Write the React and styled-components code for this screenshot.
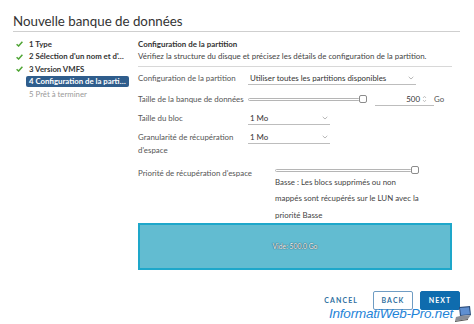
import React from "react";
import styled, { createGlobalStyle } from "styled-components";

const Global = createGlobalStyle`
  html, body { margin: 0; padding: 0; background: #fff; }
  body { font-family: Lato, "Noto Sans", sans-serif; color: #333; }
  * { box-sizing: border-box; }
`;

const Page = styled.div`
  position: relative;
  width: 474px;
  height: 324px;
  overflow: hidden;
  padding: 13px 14px 0 13px;
`;

const Title = styled.h1`
  margin: 0;
  font-size: 13.3px;
  font-weight: 400;
  color: #333;
  line-height: 17px;
  padding-bottom: 1px;
  border-bottom: 1px solid #cfcfcf;
`;

const Body = styled.div`
  display: flex;
  padding-top: 6px;
`;

const Nav = styled.ul`
  list-style: none;
  margin: 0;
  padding: 0 0 0 3px;
  width: 125px;
  flex: 0 0 125px;
`;

const NavItem = styled.li`
  display: flex;
  align-items: center;
  gap: 3px;
  height: 12.5px;
  font-size: 7.8px;
  font-weight: ${(p) => (p.$muted ? 400 : 700)};
  color: ${(p) => (p.$active ? "#fff" : p.$muted ? "#9a9a9a" : "#333")};
  white-space: nowrap;
`;

const NavLabel = styled.span`
  display: block;
  background: ${(p) => (p.$active ? "#2f5d8c" : "transparent")};
  border-radius: 2px;
  padding: 0 3px;
  line-height: 11px;
  width: ${(p) => (p.$active ? "103px" : "auto")};
  overflow: hidden;
  text-overflow: ellipsis;
`;

const CheckSlot = styled.span`
  width: 7px;
  display: inline-flex;
  justify-content: center;
`;

const Content = styled.div`
  flex: 1;
  padding-right: 8px;
`;

const Heading = styled.div`
  font-size: 7.9px;
  font-weight: 700;
  color: #333;
  line-height: 12px;
`;

const Desc = styled.div`
  font-size: 7.9px;
  color: #444;
  line-height: 13px;
  padding-bottom: 3px;
  border-bottom: 1px solid #d8d8d8;
`;

const Form = styled.div`
  display: grid;
  grid-template-columns: 110px 1fr;
  align-items: start;
  padding-top: 5px;
`;

const Label = styled.div`
  font-size: 7.9px;
  color: #555;
  line-height: 13px;
  white-space: nowrap;
  min-height: ${(p) => p.$h || 0}px;
`;

const Control = styled.div`
  display: flex;
  align-items: flex-start;
  min-height: ${(p) => p.$h || 0}px;
`;

const Select = styled.div`
  display: flex;
  align-items: center;
  justify-content: space-between;
  width: ${(p) => p.$w}px;
  height: 13px;
  padding: 0 2px;
  border-bottom: 1px solid #bdbdbd;
  font-size: 7.9px;
  color: #333;
`;

const Slider = styled.div`
  width: ${(p) => p.$w}px;
  height: 8px;
  margin-top: ${(p) => p.$mt || 0}px;
  display: flex;
  align-items: center;
`;

const Track = styled.div`
  flex: 1;
  height: 3px;
  border: 1px solid #b5b5b5;
  border-radius: 2px;
  background: #fff;
`;

const Thumb = styled.div`
  width: 8px;
  height: 8px;
  flex: 0 0 8px;
  margin-left: -1px;
  border: 1px solid #8c8c8c;
  border-radius: 2px;
  background: #fff;
`;

const NumberBox = styled.div`
  display: flex;
  align-items: center;
  justify-content: flex-end;
  gap: 2px;
  width: 59px;
  height: 13px;
  margin-left: 8px;
  padding-right: 7px;
  border-bottom: 1px solid #bdbdbd;
  font-size: 7.9px;
  color: #333;
`;

const Unit = styled.span`
  font-size: 7.9px;
  line-height: 13px;
  color: #555;
`;

const Stack = styled.div`
  display: flex;
  flex-direction: column;
  padding-left: 27px;
`;

const Help = styled.div`
  font-size: 7.9px;
  color: #444;
  line-height: 16.3px;
  width: 146px;
`;

const FreeSpace = styled.div`
  height: 47px;
  border: 2px solid #1ea7ca;
  background: #62bcd1;
  display: flex;
  align-items: center;
  justify-content: center;
  font-size: 6.8px;
  color: #fff;
  text-shadow: 0 0 1px #1c3d4a, 0 0 1px #1c3d4a;
`;

const Footer = styled.div`
  display: flex;
  justify-content: flex-end;
  align-items: center;
  gap: 7px;
  padding-top: 21px;
`;

const Button = styled.button`
  font-family: Lato, "Noto Sans", sans-serif;
  height: 19px;
  width: ${(p) => (p.$flat ? "auto" : "40px")};
  padding: 0 ${(p) => (p.$flat ? "2px" : "0")};
  font-size: 7px;
  font-weight: 700;
  letter-spacing: 1.1px;
  border-radius: 2px;
  border: 1px solid ${(p) => (p.$flat ? "transparent" : p.$primary ? "#0f6cae" : "#6f9cc3")};
  background: ${(p) => (p.$primary ? "#0f6cae" : "#fff")};
  color: ${(p) => (p.$primary ? "#fff" : "#2f6f9f")};
  margin-right: ${(p) => (p.$flat ? "5px" : 0)};
`;

const Watermark = styled.div`
  position: absolute;
  right: 2px;
  bottom: 2px;
  display: flex;
  align-items: flex-end;
  gap: 1px;
  font-family: "Liberation Sans", Arial, sans-serif;
  font-style: italic;
  font-size: 13.5px;
  line-height: 16px;
  color: #1f84d8;
  letter-spacing: -0.2px;
`;

function Check() {
  return (
    <svg width="7" height="6" viewBox="0 0 7 6">
      <path d="M0.6 3.2 L2.6 5 L6.4 0.8" fill="none" stroke="#4fa534" strokeWidth="1.5" />
    </svg>
  );
}

function Chevron() {
  return (
    <svg width="6" height="4" viewBox="0 0 6 4">
      <path d="M0.7 0.8 L3 3 L5.3 0.8" fill="none" stroke="#999" strokeWidth="0.7" />
    </svg>
  );
}

function Spinner() {
  return (
    <svg width="5" height="8" viewBox="0 0 5 8">
      <path d="M1 3 L2.5 1.3 L4 3 M1 5 L2.5 6.7 L4 5" fill="none" stroke="#aaa" strokeWidth="0.7" />
    </svg>
  );
}

function Laptop() {
  return (
    <svg width="18" height="16" viewBox="0 0 18 16">
      <path d="M5 1 L16 0 L17 9 L6 10 Z" fill="#2a4b7a" />
      <path d="M6 2 L15 1.2 L16 8.2 L7 9 Z" fill="#5f8fd0" />
      <path d="M2 11 L6 10 L17 9 L14 13 L1 15 Z" fill="#8a8f98" />
      <path d="M1 15 L14 13 L14 14 L1 16 Z" fill="#555" />
    </svg>
  );
}

const steps = [
  { label: "1 Type", done: true },
  { label: "2 Sélection d'un nom et d'…", done: true },
  { label: "3 Version VMFS", done: true },
  { label: "4 Configuration de la partit…", active: true },
  { label: "5 Prêt à terminer", muted: true },
];

export default function App() {
  return (
    <Page>
      <Global />
      <Title>Nouvelle banque de données</Title>
      <Body>
        <Nav>
          {steps.map((s) => (
            <NavItem key={s.label} $active={s.active} $muted={s.muted}>
              <CheckSlot>{s.done && <Check />}</CheckSlot>
              <NavLabel $active={s.active}>{s.label}</NavLabel>
            </NavItem>
          ))}
        </Nav>
        <Content>
          <Heading>Configuration de la partition</Heading>
          <Desc>Vérifiez la structure du disque et précisez les détails de configuration de la partition.</Desc>
          <Form>
            <Label $h={21}>Configuration de la partition</Label>
            <Control $h={21}>
              <Select $w={168}>
                <span>Utiliser toutes les partitions disponibles</span>
                <Chevron />
              </Select>
            </Control>

            <Label $h={19}>Taille de la banque de données</Label>
            <Control $h={19}>
              <Slider $w={119} $mt={2}>
                <Track />
                <Thumb />
              </Slider>
              <NumberBox>
                <span>500</span>
                <Spinner />
              </NumberBox>
              <Unit>Go</Unit>
            </Control>

            <Label $h={19}>Taille du bloc</Label>
            <Control $h={19}>
              <Select $w={82}>
                <span>1 Mo</span>
                <Chevron />
              </Select>
            </Control>

            <Label $h={36}>
              Granularité de récupération
              <br />
              d'espace
            </Label>
            <Control $h={36}>
              <Select $w={82}>
                <span>1 Mo</span>
                <Chevron />
              </Select>
            </Control>

            <Label>Priorité de récupération d'espace</Label>
            <Stack>
              <Slider $w={144} $mt={-1}>
                <Track />
                <Thumb />
              </Slider>
              <Help>Basse : Les blocs supprimés ou non mappés sont récupérés sur le LUN avec la priorité Basse</Help>
            </Stack>
          </Form>
          <FreeSpace>Vide: 500.0 Go</FreeSpace>
        </Content>
      </Body>
      <Footer>
        <Button $flat>CANCEL</Button>
        <Button>BACK</Button>
        <Button $primary>NEXT</Button>
      </Footer>
      <Watermark>
        <span>InformatiWeb-Pro.net</span>
        <Laptop />
      </Watermark>
    </Page>
  );
}
